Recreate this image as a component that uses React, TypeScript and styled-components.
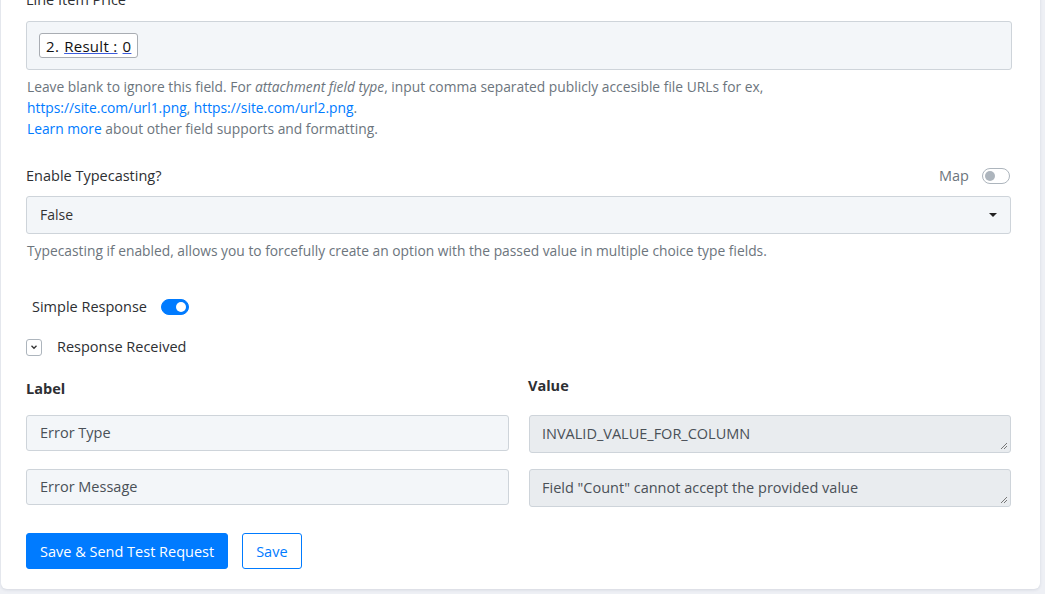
import React, { useState } from 'react';
import styled, { createGlobalStyle, css } from 'styled-components';

const GlobalStyle = createGlobalStyle`
  html, body {
    margin: 0;
    padding: 0;
    background: #eef0f5;
    font-family: "Open Sans", Lato, sans-serif;
    line-height: 20px;
    color: #333;
    overflow: hidden;
  }
`;

const Page = styled.div`
  width: 1045px;
  height: 594px;
  padding: 0 5px 0 1px;
  box-sizing: border-box;
  overflow: hidden;
`;

const Card = styled.div`
  background: #fff;
  border-radius: 0 0 6px 6px;
  box-shadow: 0 1px 3px rgba(40, 50, 80, 0.12);
  height: 601px;
  margin-top: -12px;
  padding: 0 28px 0 25px;
  box-sizing: border-box;
`;

const FieldLabel = styled.div`
  font-size: 14.5px;
  line-height: 24px;
  color: #2d2f33;
`;

const LabelRow = styled.div`
  display: flex;
  justify-content: space-between;
  align-items: center;
  margin-top: 25px;
  margin-right: 2px;
`;

const MapSwitch = styled.label`
  display: flex;
  align-items: center;
  gap: 13px;
  font-size: 14.5px;
  color: #6c757d;
`;

const Toggle = styled.span<{ on?: boolean }>`
  position: relative;
  width: 28px;
  height: 16px;
  border-radius: 8px;
  box-sizing: border-box;
  border: 1px solid ${({ on }) => (on ? '#007bff' : '#adb5bd')};
  background: ${({ on }) => (on ? '#007bff' : '#fff')};

  &::after {
    content: '';
    position: absolute;
    top: 2px;
    width: 10px;
    height: 10px;
    border-radius: 50%;
    background: ${({ on }) => (on ? '#fff' : '#adb5bd')};
    ${({ on }) =>
      on
        ? css`
            left: 14px;
          `
        : css`
            left: 2px;
          `}
  }
`;

const TokenBox = styled.div`
  margin-top: 9px;
  height: 49px;
  background: #f3f6f9;
  border: 1px solid #ced4da;
  border-radius: 3px;
  display: flex;
  align-items: center;
  padding-left: 12px;
  box-sizing: border-box;
`;

const Token = styled.span`
  display: inline-flex;
  align-items: center;
  height: 25px;
  padding: 0 6px;
  gap: 5px;
  background: #fff;
  border: 1px solid #a9adb3;
  border-radius: 3px;
  font-size: 15px;
  letter-spacing: 0.3px;
  color: #111;
  box-sizing: border-box;

  u {
    text-decoration-color: #3b5bdb;
  }
`;

const Help = styled.p`
  margin: 6px 0 0 1px;
  font-size: 13.8px;
  line-height: 21px;
  color: #6c757d;

  em {
    font-style: italic;
  }

  a {
    color: #007bff;
    text-decoration: none;
  }
`;

const Select = styled.div`
  margin-top: 8px;
  height: 38px;
  margin-right: 1px;
  background: #f3f6f9;
  border: 1px solid #ced4da;
  border-radius: 3px;
  display: flex;
  align-items: center;
  justify-content: space-between;
  padding: 0 13px 0 13px;
  box-sizing: border-box;
  font-size: 14px;
  color: #333;
`;

const Caret = styled.span`
  width: 0;
  height: 0;
  border-left: 4px solid transparent;
  border-right: 4px solid transparent;
  border-top: 4px solid #222;
`;

const SwitchRow = styled.div`
  display: flex;
  align-items: center;
  gap: 14px;
  margin: 36px 0 0 6px;
  font-size: 14.5px;
  color: #2d2f33;
`;

const Collapse = styled.div`
  display: flex;
  align-items: center;
  gap: 15px;
  margin-top: 20px;
  font-size: 14.5px;
  color: #2d2f33;
`;

const ChevronBox = styled.span`
  width: 16px;
  height: 17px;
  border: 1px solid #adb5bd;
  border-radius: 3px;
  display: inline-flex;
  align-items: center;
  justify-content: center;
  box-sizing: border-box;
`;

const Grid = styled.div`
  display: grid;
  grid-template-columns: 483px 483px;
  column-gap: 19px;
  row-gap: 16px;
  margin-top: 19px;
`;

const ColHead = styled.div<{ shift?: number }>`
  font-weight: 700;
  font-size: 14.5px;
  color: #2d2f33;
  margin-top: ${({ shift }) => shift ?? 0}px;
  margin-bottom: 0;
`;

const KeyInput = styled.div`
  height: 36px;
  background: #f3f6f9;
  border: 1px solid #ced4da;
  border-radius: 3px;
  display: flex;
  align-items: center;
  padding-left: 13px;
  box-sizing: border-box;
  font-size: 14.5px;
  color: #495057;
`;

const ValueArea = styled.div`
  position: relative;
  height: 38px;
  margin-left: 1px;
  background: #e9ecef;
  border: 1px solid #ced4da;
  border-radius: 3px;
  display: flex;
  align-items: center;
  padding-left: 12px;
  box-sizing: border-box;
  font-size: 14.5px;
  color: #495057;
`;

const Grip = styled.svg`
  position: absolute;
  right: 2px;
  bottom: 2px;
`;

const Actions = styled.div`
  display: flex;
  gap: 14px;
  margin-top: 26px;
`;

const Button = styled.button<{ variant?: 'primary' | 'outline' }>`
  height: 36px;
  border-radius: 3px;
  font-family: inherit;
  font-size: 14.5px;
  padding: 0 13px;
  cursor: pointer;
  ${({ variant }) =>
    variant === 'outline'
      ? css`
          background: #fff;
          color: #007bff;
          border: 1px solid #007bff;
        `
      : css`
          background: #007bff;
          color: #fff;
          border: 1px solid #007bff;
        `}
`;

const ResizeGrip = () => (
  <Grip width="8" height="8" viewBox="0 0 8 8">
    <path d="M7 1 L1 7 M7 4 L4 7" stroke="#777" strokeWidth="1" />
  </Grip>
);

const responses = [
  { label: 'Error Type', value: 'INVALID_VALUE_FOR_COLUMN' },
  { label: 'Error Message', value: 'Field "Count" cannot accept the provided value' },
];

const App = () => {
  const [simple, setSimple] = useState(true);

  return (
    <Page>
      <GlobalStyle />
      <Card>
        <FieldLabel>Line Item Price</FieldLabel>
        <TokenBox>
          <Token>
            2. <u>Result :</u> <u>0</u>
          </Token>
        </TokenBox>
        <Help>
          Leave blank to ignore this field. For <em>attachment field type</em>, input comma separated publicly
          accesible file URLs for ex,
          <br />
          <a href="#">https://site.com/url1.png</a>, <a href="#">https://site.com/url2.png</a>.
          <br />
          <a href="#">Learn more</a> about other field supports and formatting.
        </Help>

        <LabelRow>
          <FieldLabel>Enable Typecasting?</FieldLabel>
          <MapSwitch>
            Map
            <Toggle />
          </MapSwitch>
        </LabelRow>
        <Select>
          False
          <Caret />
        </Select>
        <Help>
          Typecasting if enabled, allows you to forcefully create an option with the passed value in multiple
          choice type fields.
        </Help>

        <SwitchRow onClick={() => setSimple(!simple)}>
          Simple Response
          <Toggle on={simple} />
        </SwitchRow>
        <Collapse>
          <ChevronBox>
            <svg width="10" height="10" viewBox="0 0 10 10">
              <path d="M2.5 3.8 L5 6.3 L7.5 3.8" fill="none" stroke="#333" strokeWidth="1.3" />
            </svg>
          </ChevronBox>
          Response Received
        </Collapse>

        <Grid>
          <ColHead shift={3}>Label</ColHead>
          <ColHead shift={0}>Value</ColHead>
          {responses.map((r) => (
            <React.Fragment key={r.label}>
              <KeyInput>{r.label}</KeyInput>
              <ValueArea>
                {r.value}
                <ResizeGrip />
              </ValueArea>
            </React.Fragment>
          ))}
        </Grid>

        <Actions>
          <Button variant="primary">Save &amp; Send Test Request</Button>
          <Button variant="outline">Save</Button>
        </Actions>
      </Card>
    </Page>
  );
};

export default App;
